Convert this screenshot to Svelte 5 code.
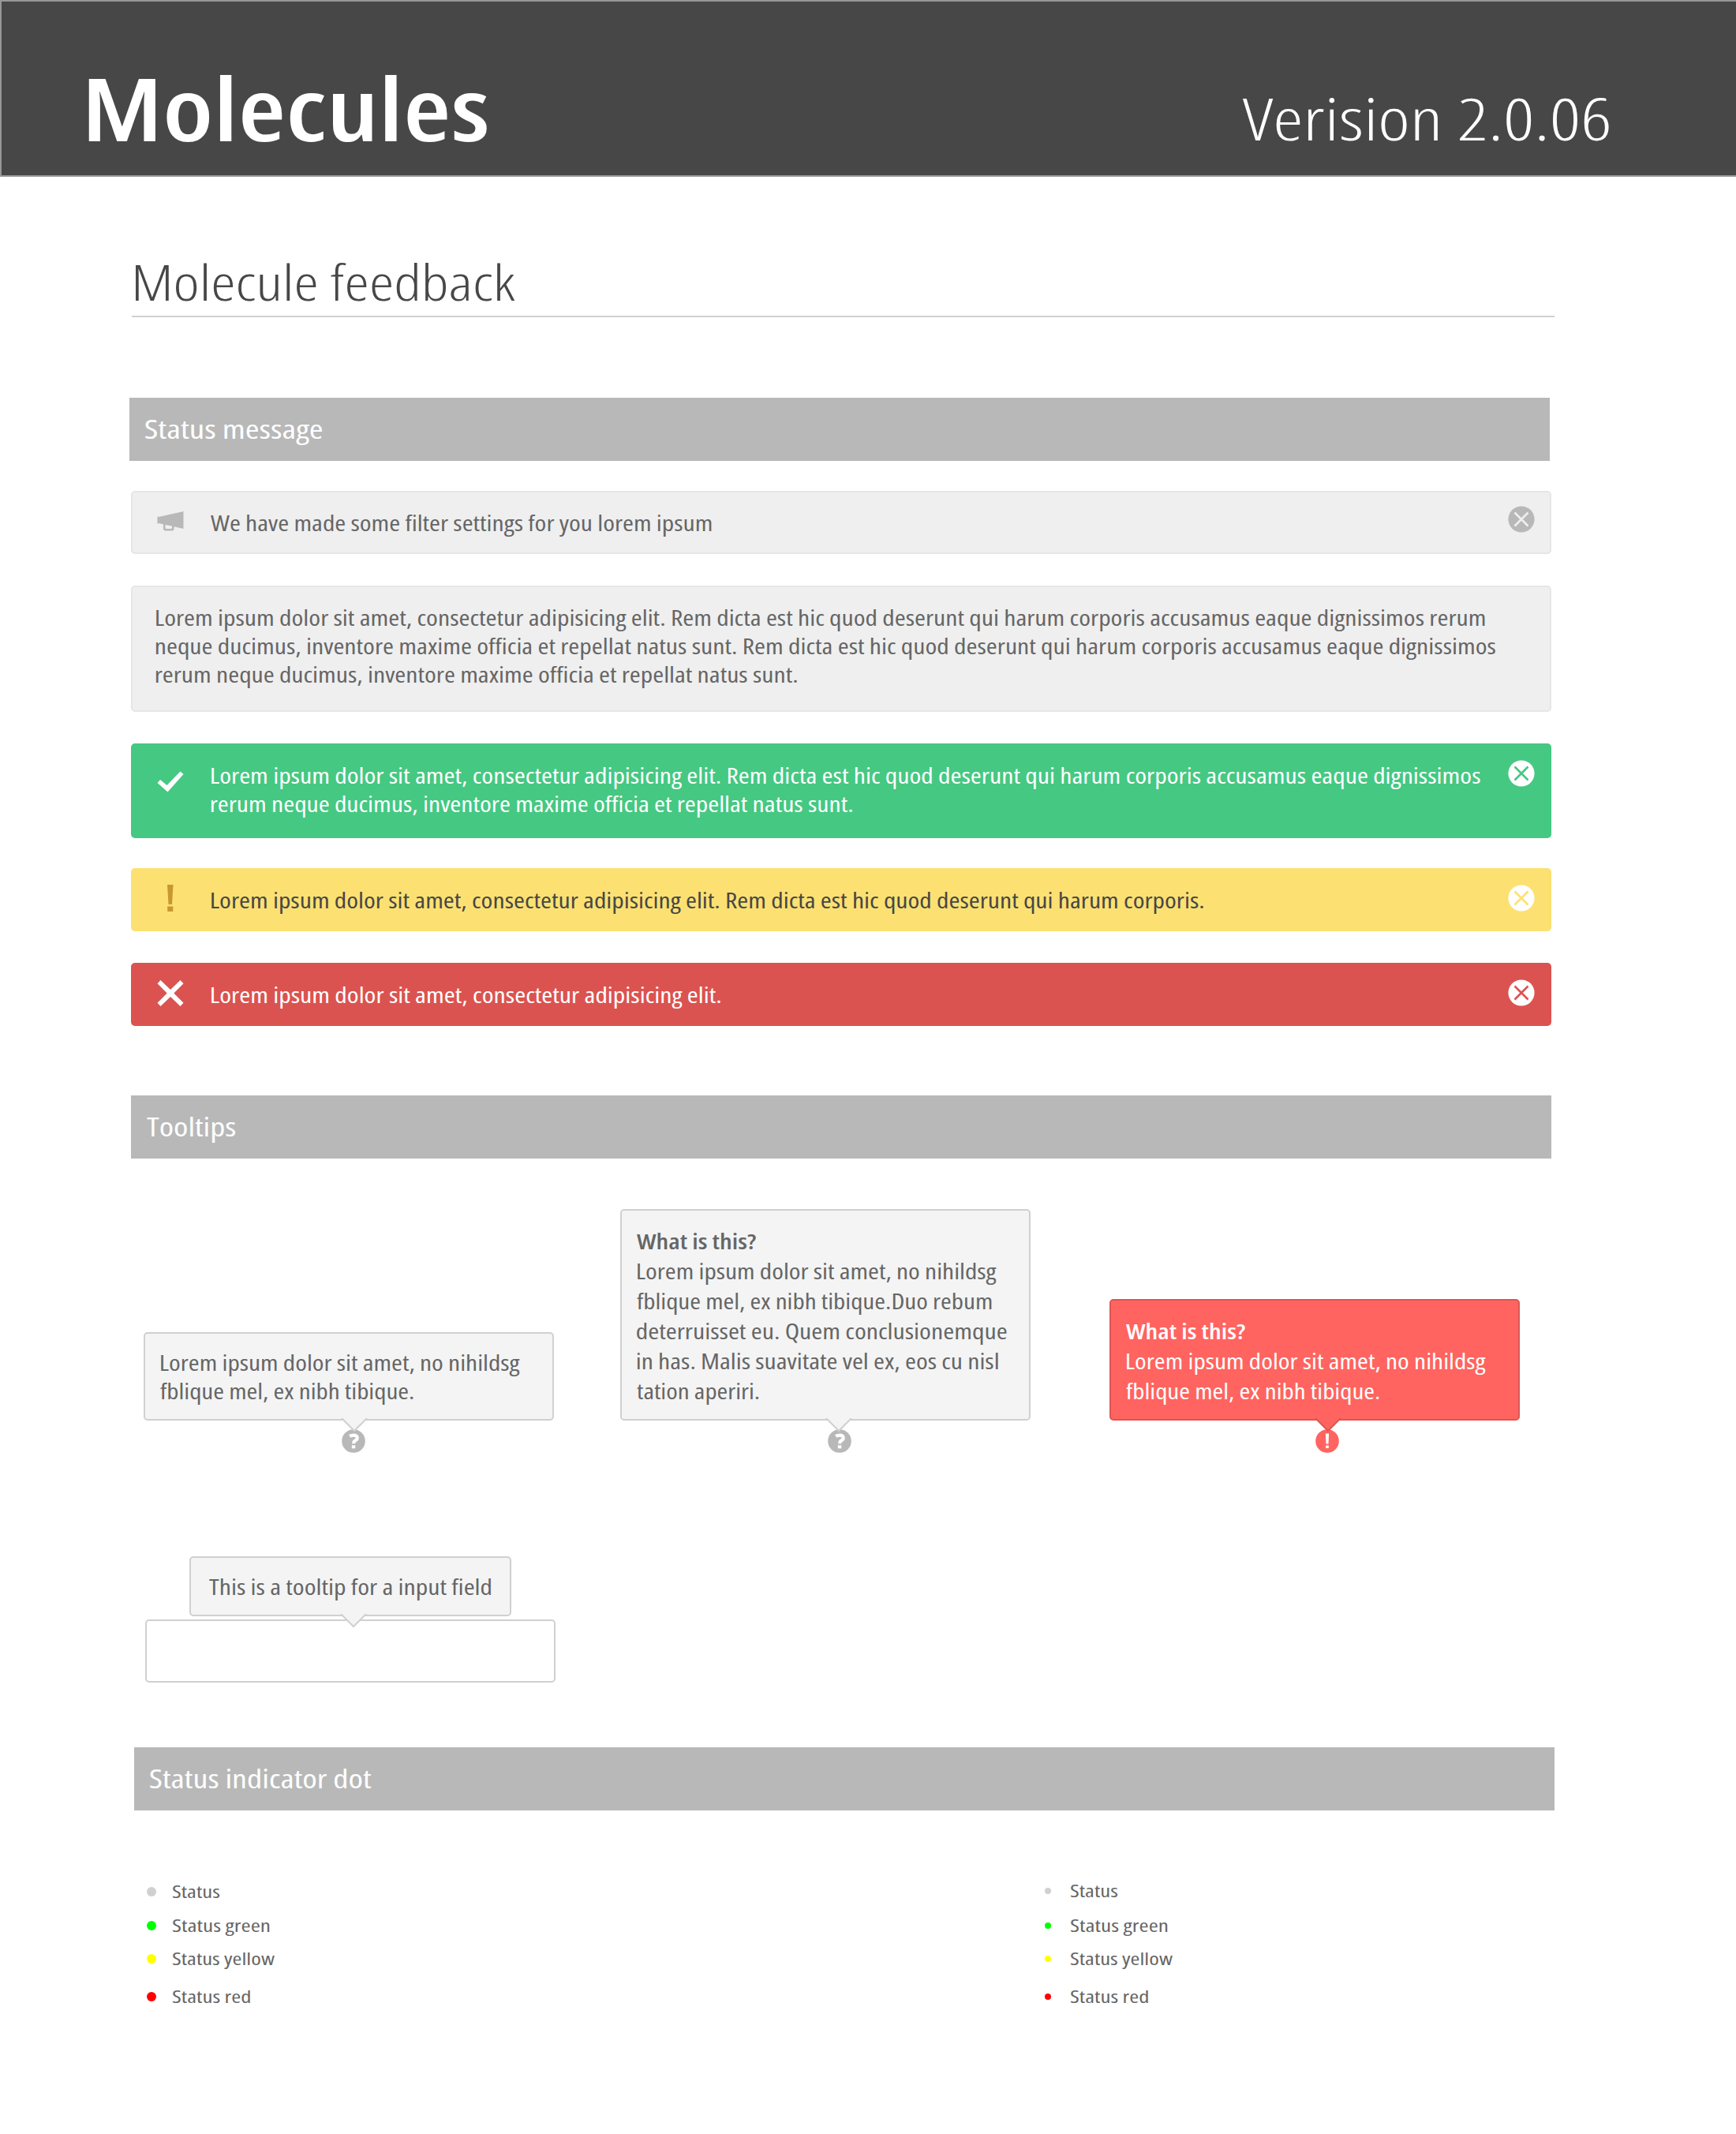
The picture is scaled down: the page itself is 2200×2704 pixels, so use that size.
<script>
  // Scales a line of text horizontally so that its ink spans the given width.
  function fit(node, width) {
    const style = getComputedStyle(node);
    const ctx = document.createElement('canvas').getContext('2d');
    ctx.font = `${style.fontWeight} ${style.fontSize} ${style.fontFamily}`;
    ctx.fontStretch = 'semi-condensed';
    const m = ctx.measureText(node.textContent);
    const ratio = node.offsetWidth / m.width;
    const left = -m.actualBoundingBoxLeft * ratio;
    const ink = (m.actualBoundingBoxRight + m.actualBoundingBoxLeft) * ratio;
    const scale = width / ink;
    node.style.transform = `translateX(${-left * scale}px) scaleX(${scale})`;
  }

  const messages = [
    { kind: 'info', icon: 'horn', close: true, lines: [['We have made some filter settings for you lorem ipsum', 635]] },
    {
      kind: 'info',
      lines: [
        ['Lorem ipsum dolor sit amet, consectetur adipisicing elit. Rem dicta est hic quod deserunt qui harum corporis accusamus eaque dignissimos rerum', 1685],
        ['neque ducimus, inventore maxime officia et repellat natus sunt. Rem dicta est hic quod deserunt qui harum corporis accusamus eaque dignissimos', 1699],
        ['rerum neque ducimus, inventore maxime officia et repellat natus sunt.', 814]
      ]
    },
    {
      kind: 'success', icon: 'check', close: true,
      lines: [
        ['Lorem ipsum dolor sit amet, consectetur adipisicing elit. Rem dicta est hic quod deserunt qui harum corporis accusamus eaque dignissimos', 1610],
        ['rerum neque ducimus, inventore maxime officia et repellat natus sunt.', 814]
      ]
    },
    {
      kind: 'warning', icon: 'bang', close: true,
      lines: [['Lorem ipsum dolor sit amet, consectetur adipisicing elit. Rem dicta est hic quod deserunt qui harum corporis.', 1258]]
    },
    { kind: 'error', icon: 'cross', close: true, lines: [['Lorem ipsum dolor sit amet, consectetur adipisicing elit.', 647]] }
  ];

  const tips = [
    {
      kind: 'plain', mark: '?',
      lines: [['Lorem ipsum dolor sit amet, no nihildsg', 456], ['fblique mel, ex nibh tibique.', 321]]
    },
    {
      kind: 'wide', mark: '?', title: ['What is this?', 151],
      lines: [
        ['Lorem ipsum dolor sit amet, no nihildsg', 456],
        ['fblique mel, ex nibh tibique.Duo rebum', 450],
        ['deterruisset eu. Quem conclusionemque', 468],
        ['in has. Malis suavitate vel ex, eos cu nisl', 458],
        ['tation aperiri.', 155]
      ]
    },
    {
      kind: 'alert', mark: '!', title: ['What is this?', 151],
      lines: [['Lorem ipsum dolor sit amet, no nihildsg', 456], ['fblique mel, ex nibh tibique.', 321]]
    }
  ];

  const statuses = [
    ['Status', 61, 'none'],
    ['Status green', 124, 'green'],
    ['Status yellow', 130.5, 'yellow'],
    ['Status red', 98.5, 'red']
  ];
</script>

{#snippet line(text, width)}
  <div class="line"><span use:fit={width}>{text}</span></div>
{/snippet}

{#snippet arrow()}
  <svg class="arrow" width="34" height="18" viewBox="0 0 34 18">
    <path class="arrow-fill" d="M1 0L17 16L33 0Z" />
    <path class="arrow-edge" d="M0.5 1H2L17 16L32 1H33.5" />
  </svg>
{/snippet}

<header>
  <h1><span use:fit={505}>Molecules</span></h1>
  <p class="version"><span use:fit={463.5}>Verision 2.0.06</span></p>
</header>

<main>
  <h2><span use:fit={482}>Molecule feedback</span></h2>

  <h3 class="bar bar-messages"><span use:fit={224.5}>Status message</span></h3>
  <div class="messages">
    {#each messages as m}
      <div class="message {m.kind}" class:text-only={!m.icon}>
        {#if m.icon}
          <svg class="icon {m.icon}" width="34" height="36" viewBox="0 0 34 36">
            {#if m.icon === 'horn'}
              <path d="M0.5 8.5H2V9L33.5 2V24L21.5 21.2V24Q21.5 26.5 19 26.5H11Q8 26.5 8 24V18.3L2 17V17.5H0.5ZM10.500 19V23Q10.500 24 11.500 24H18Q19 24 19 23V20.600Z" fill-rule="evenodd" />
            {:else if m.icon === 'check'}
              <path d="M0.500 18L4 14L12.500 21L29.500 3.500L33.500 7L13.500 29.500Z" />
            {:else if m.icon === 'bang'}
              <path d="M13 1H20.500L19 26H14.500ZM13.200 28.500H20.300V35H13.200Z" />
            {:else}
              <path d="M4.500 1L17 13L29.500 1L33.500 5.300L21.300 17.500L33.500 29.700L29.500 34L17 22L4.500 34L0.500 29.700L12.700 17.500L0.500 5.300Z" />
            {/if}
          </svg>
        {/if}
        <div class="copy">
          {#each m.lines as [text, width]}
            {@render line(text, width)}
          {/each}
        </div>
        {#if m.close}
          <svg class="close" width="34" height="34" viewBox="0 0 34 34">
            <circle cx="17" cy="17" r="16.600" />
            <path d="M8.500 8.500L25.500 25.500M25.500 8.500L8.500 25.500" />
          </svg>
        {/if}
      </div>
    {/each}
  </div>

  <h3 class="bar bar-tooltips"><span use:fit={112.5}>Tooltips</span></h3>
  <div class="tips">
    {#each tips as t}
      <div class="tip {t.kind}">
        {#if t.title}
          <strong>{@render line(t.title[0], t.title[1])}</strong>
        {/if}
        {#each t.lines as [text, width]}
          {@render line(text, width)}
        {/each}
        <svg class="mark" width="30" height="30" viewBox="0 0 30 30">
          <circle cx="15" cy="15" r="14.800" />
          {#if t.mark === '?'}
            <path class="glyph-line" d="M10.200 8.900Q12.300 7.600 15 7.600Q19.700 7.600 19.700 11Q19.700 13 17.500 14.200Q15.200 15.400 15.200 18.200" />
            <path class="glyph" d="M12.800 20.300H17.300V24.300H12.800Z" />
          {:else}
            <path class="glyph" d="M12.900 5.500H17.100L16.500 18.500H13.500ZM13.200 20.500H16.800V24H13.200Z" />
          {/if}
        </svg>
        {@render arrow()}
      </div>
    {/each}
  </div>

  <div class="field">
    <div class="tip field-tip">
      {@render line('This is a tooltip for a input field', 358)}
      {@render arrow()}
    </div>
    <div class="input"></div>
  </div>

  <h3 class="bar bar-dots"><span use:fit={281}>Status indicator dot</span></h3>
  <div class="dots">
    {#each ['large', 'small'] as size}
      <ul class={size}>
        {#each statuses as [label, width, colour]}
          <li><i class={colour}></i><span use:fit={width}>{label}</span></li>
        {/each}
      </ul>
    {/each}
  </div>
</main>

<style>
  :global(body) {
    background: #fff;
    font-family: 'Open Sans', 'Noto Sans', sans-serif;
    font-stretch: 87.5%;
    color: #666;
  }

  h1, h2, h3, p, ul { margin: 0; padding: 0; font-weight: 400; }

  span {
    display: inline-block;
    white-space: nowrap;
    transform-origin: 0 50%;
  }

  header {
    box-sizing: border-box;
    height: 224px;
    padding: 0 161px 0 110px;
    display: flex;
    justify-content: space-between;
    background: #474747;
    border: 2px solid #979797;
    border-right: 0;
    color: #fff;
  }
  h1 {
    font-size: 110px;
    font-weight: 650;
    line-height: 120px;
    padding-top: 74px;
  }
  .version {
    width: 464px;
    font-size: 74px;
    font-weight: 300;
    line-height: 100px;
    padding-top: 98px;
  }

  main { padding: 0 230px 0 164px; }

  h2 {
    box-sizing: border-box;
    height: 178px;
    width: 1803px;
    margin-left: 3px;
    padding: 93px 0 0 4px;
    border-bottom: 2px solid #d0d0d0;
    color: #474747;
    font-size: 62px;
    font-weight: 300;
    line-height: 80px;
  }

  .bar {
    box-sizing: border-box;
    width: 1800px;
    height: 80px;
    padding: 0 20px;
    background: #b8b8b8;
    color: #fff;
    font-size: 32px;
    line-height: 80px;
  }
  .bar-messages { margin-top: 102px; }
  .bar-tooltips { margin: 88px 0 0 2px; }
  .bar-dots { margin: 82px 0 0 6px; }

  .messages {
    width: 1800px;
    margin: 38px 0 0 2px;
    display: flex;
    flex-direction: column;
    gap: 40px;
  }
  .message {
    box-sizing: border-box;
    display: flex;
    align-items: flex-start;
    height: 80px;
    padding: 20px 19px 20px 31px;
    border: 2px solid transparent;
    border-radius: 5px;
    font-size: 26.500px;
    line-height: 36px;
  }
  .icon { margin-right: 34px; fill: #fff; flex: none; }
  .copy { flex: 1; padding-top: 1px; }
  .close { flex: none; margin-top: -1px; fill: #fff; }
  .close path { stroke-width: 2.600; stroke: currentColor; }
  .close circle { stroke: none; }

  .info { background: #efefef; border-color: #e6e6e6; }
  .text-only { height: 160px; padding-left: 29px; }
  .info .close { fill: #b8b8b8; margin-top: -3px; color: #efefef; }
  .success { background: #45c882; height: 120px; color: #fff; }
  .success + .warning { margin-top: -2px; }
  .warning { background: #fce172; color: #474747; }
  .error { background: #db5350; color: #fff; }
  .success .close { color: #45c882; }
  .warning .close { color: #fce172; }
  .error .close { color: #db5350; }
  .horn { margin-top: 2px; fill: #b8b8b8; }
  .check { margin-top: 10px; }
  .bang { margin-top: -2px; fill: #c99732; }
  .cross { margin-top: -1px; }

  .line { display: block; height: var(--lh, 36px); line-height: var(--lh, 36px); }

  .tips {
    display: flex;
    align-items: flex-end;
    height: 332px;
    margin-left: 18px;
  }
  .tip {
    --edge: #d0d0d0;
    --fill: #f4f4f4;
    --mark: #b8b8b8;
    position: relative;
    box-sizing: border-box;
    width: 520px;
    padding: 19px 18.500px;
    border: 2px solid var(--edge);
    border-radius: 5px;
    background: var(--fill);
    font-size: 26.500px;
  }
  .plain { height: 112px; }
  .wide, .alert { --lh: 38px; padding-top: 20px; }
  .wide { height: 268px; margin-left: 84px; }
  .alert {
    --edge: #dc5653;
    --fill: #ff6460;
    --mark: #ff6460;
    height: 154px;
    margin-left: 100px;
    color: #fff;
  }
  strong { font-weight: 600; }

  .arrow { position: absolute; left: 247.500px; bottom: -17px; }
  .wide .arrow { left: 257.500px; }
  .alert .arrow { left: 257.500px; }
  .arrow-fill { fill: var(--fill); }
  .arrow-edge { fill: none; stroke: var(--edge); stroke-width: 2; }
  .mark { position: absolute; left: 249px; bottom: -43px; }
  .wide .mark { left: 261px; }
  .alert .mark { left: 259px; }
  .mark circle { fill: var(--mark); }
  .glyph { fill: #fff; }
  .glyph-line { fill: none; stroke: #fff; stroke-width: 4.200; }

  .field { margin: 172px 0 0 20px; width: 520px; }
  .field-tip {
    width: 408px;
    height: 76px;
    margin-left: 56px;
    padding-left: 22.500px;
    z-index: 1;
  }
  .field-tip .arrow { left: 189px; }
  .input {
    box-sizing: border-box;
    height: 80px;
    margin-top: 4px;
    border: 2px solid #d0d0d0;
    border-radius: 5px;
    background: #fff;
  }

  .dots { display: flex; margin-left: 22px; }
  .dots span { padding-bottom: 2px; }
  ul { flex: none; width: 1138px; padding-top: 86px; list-style: none; font-size: 22px; }
  ul.small { width: 400px; padding-top: 85px; }
  li { display: flex; align-items: center; height: 34px; margin-bottom: 9px; }
  li:nth-child(2) { margin-bottom: 8px; }
  li:nth-child(3) { margin-bottom: 14px; }
  .small li:nth-child(1) { margin-bottom: 10px; }
  i { width: 12px; height: 12px; margin-right: 19.500px; border-radius: 50%; background: #d0d0d0; }
  .small i { width: 8px; height: 8px; margin-right: 23.500px; }
  i.green { background: #0f0; }
  i.yellow { background: #ff0; }
  i.red { background: #f00; }
</style>
